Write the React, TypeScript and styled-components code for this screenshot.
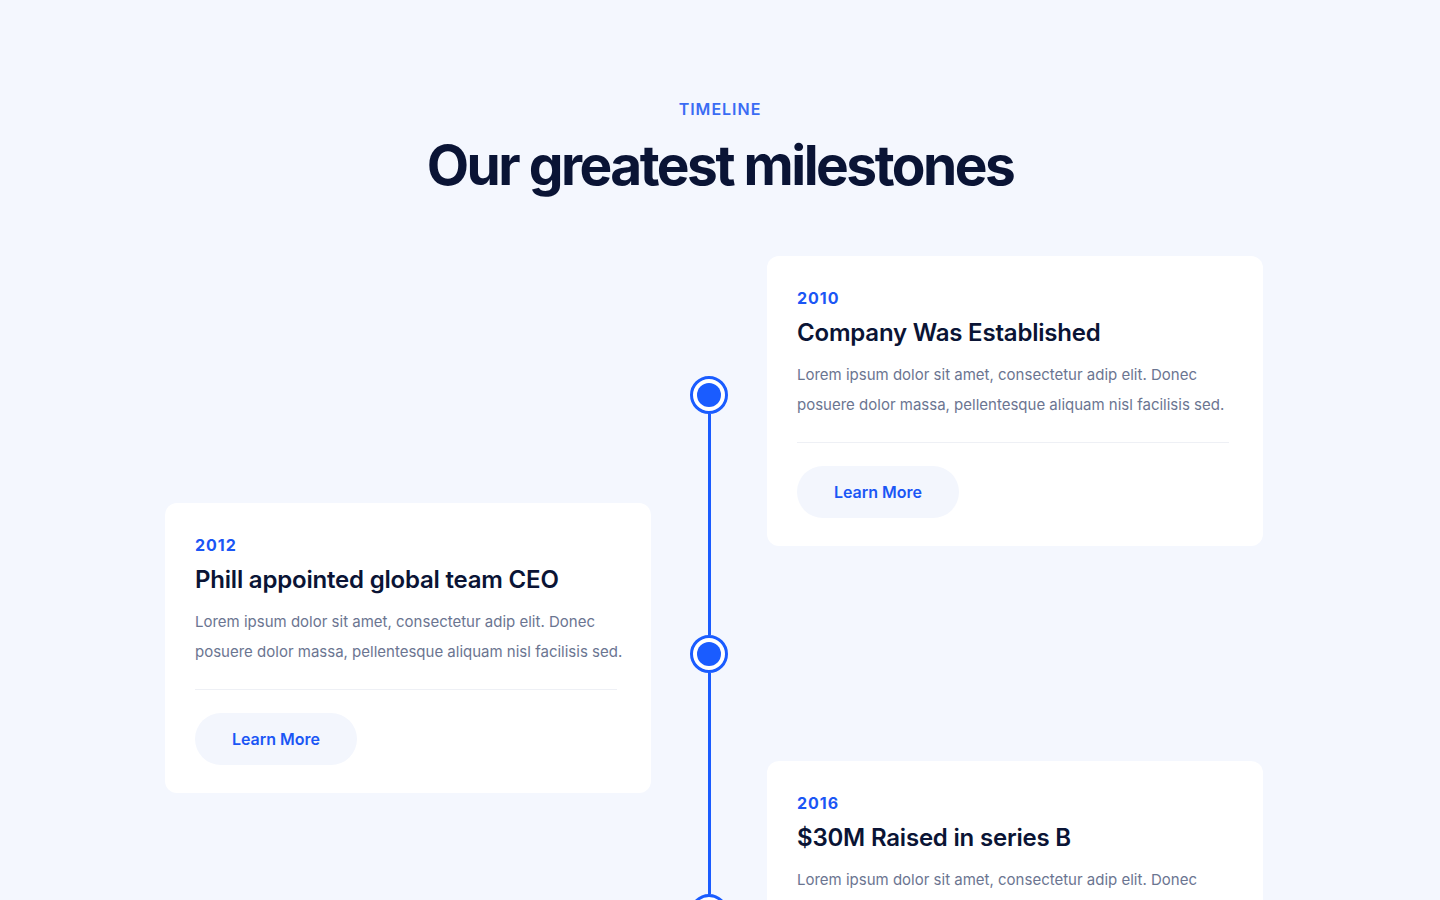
import React from "react";
import styled, { createGlobalStyle } from "styled-components";

const Global = createGlobalStyle`
  html, body { margin: 0; padding: 0; }
  body {
    background: #f4f7fe;
    font-family: Inter, "Noto Sans", sans-serif;
    -webkit-font-smoothing: antialiased;
  }
`;

const Page = styled.main`
  height: 900px;
  padding-top: 99px;
  box-sizing: border-box;
  overflow: hidden;
`;

const Header = styled.header`
  display: flex;
  flex-direction: column;
  align-items: center;
`;

const Eyebrow = styled.span`
  font-size: 16px;
  line-height: 20px;
  font-weight: 600;
  letter-spacing: 1px;
  color: #3a6cf4;
`;

const Heading = styled.h1`
  margin: 15px 0 0;
  font-size: 55px;
  line-height: 62px;
  font-weight: 700;
  letter-spacing: -2.5px;
  color: #0a1435;
`;

const Grid = styled.section`
  width: 1110px;
  margin: 60px auto 0;
  display: grid;
  grid-template-columns: 486px 116px 496px;
  align-items: start;
`;

const Column = styled.div<{ $top: number; $gap: number }>`
  display: flex;
  flex-direction: column;
  padding-top: ${(p) => p.$top}px;
  gap: ${(p) => p.$gap}px;
`;

const Track = styled.div`
  display: flex;
  flex-direction: column;
  align-items: center;
  padding-top: 120px;
`;

const Dot = styled.div`
  width: 38px;
  height: 38px;
  box-sizing: border-box;
  border: 3px solid #1a5cff;
  border-radius: 50%;
  padding: 4px;
  background: #ffffff;
  flex-shrink: 0;
  &::after {
    content: "";
    display: block;
    width: 100%;
    height: 100%;
    border-radius: 50%;
    background: #1a5cff;
  }
`;

const Connector = styled.div`
  width: 3px;
  height: 221px;
  background: #1a5cff;
`;

const Card = styled.article`
  background: #ffffff;
  border-radius: 12px;
  padding: 32px 34px 28px 30px;
  display: flex;
  flex-direction: column;
  align-items: flex-start;
`;

const Year = styled.span`
  font-size: 16px;
  line-height: 20px;
  font-weight: 700;
  letter-spacing: 1px;
  color: #1b56f5;
`;

const Title = styled.h3`
  margin: 9px 0 0;
  font-size: 24px;
  line-height: 31px;
  font-weight: 600;
  letter-spacing: -0.2px;
  color: #0a1435;
`;

const Body = styled.p`
  margin: 12px 0 0;
  font-size: 15px;
  line-height: 30px;
  color: #6b7591;
  white-space: nowrap;
`;

const Divider = styled.hr`
  align-self: stretch;
  margin: 22px 0 0;
  border: 0;
  height: 1px;
  background: #eef0f5;
`;

const Button = styled.button`
  margin-top: 23px;
  width: 162px;
  height: 52px;
  border: 0;
  border-radius: 26px;
  background: #f3f6fd;
  color: #1b56f5;
  font-family: Inter, "Noto Sans", sans-serif;
  font-size: 16px;
  font-weight: 600;
  cursor: pointer;
`;

type Item = { year: string; title: string };

const MilestoneCard = ({ year, title }: Item) => (
  <Card>
    <Year>{year}</Year>
    <Title>{title}</Title>
    <Body>
      Lorem ipsum dolor sit amet, consectetur adip elit. Donec
      <br />
      posuere dolor massa, pellentesque aliquam nisl facilisis sed.
    </Body>
    <Divider />
    <Button>Learn More</Button>
  </Card>
);

export default function App() {
  return (
    <Page>
      <Global />
      <Header>
        <Eyebrow>TIMELINE</Eyebrow>
        <Heading>Our greatest milestones</Heading>
      </Header>
      <Grid>
        <Column $top={247} $gap={215}>
          <MilestoneCard year="2012" title="Phill appointed global team CEO" />
        </Column>
        <Track>
          <Dot />
          <Connector />
          <Dot />
          <Connector />
          <Dot />
        </Track>
        <Column $top={0} $gap={215}>
          <MilestoneCard year="2010" title="Company Was Established" />
          <MilestoneCard year="2016" title="$30M Raised in series B" />
        </Column>
      </Grid>
    </Page>
  );
}
